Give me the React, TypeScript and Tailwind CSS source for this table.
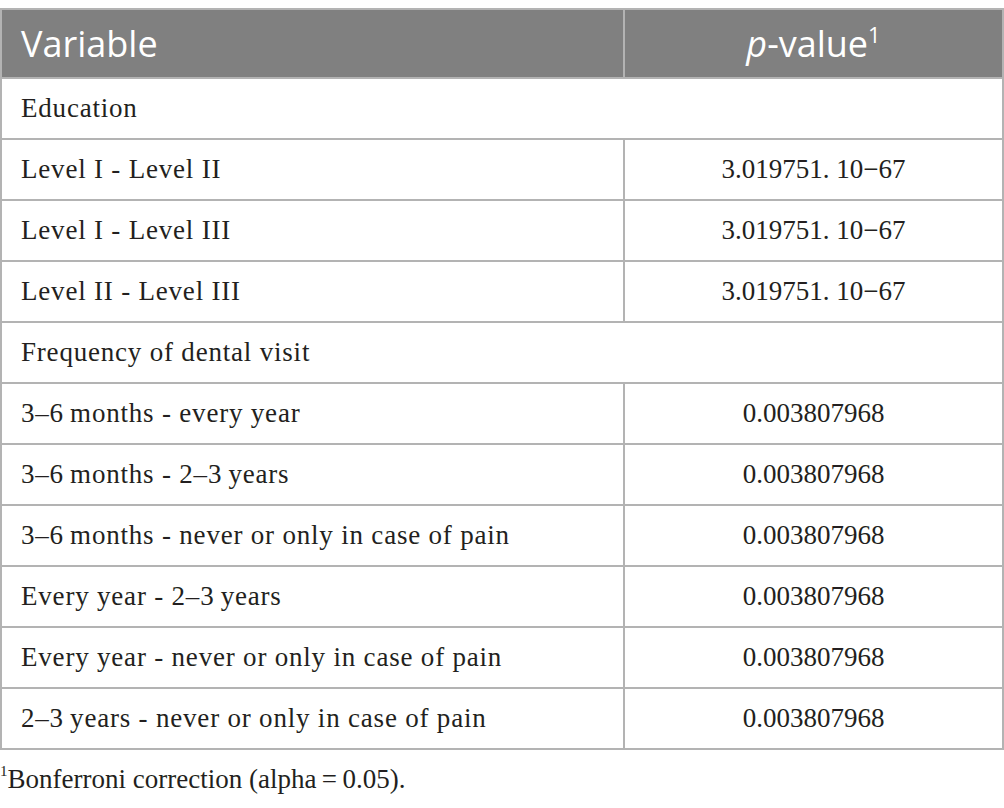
const rows: { label: string; value?: string }[] = [
  { label: 'Education' },
  { label: 'Level I - Level II', value: '3.019751. 10−67' },
  { label: 'Level I - Level III', value: '3.019751. 10−67' },
  { label: 'Level II - Level III', value: '3.019751. 10−67' },
  { label: 'Frequency of dental visit' },
  { label: '3–6\u2009months - every year', value: '0.003807968' },
  { label: '3–6\u2009months - 2–3\u2009years', value: '0.003807968' },
  { label: '3–6\u2009months - never or only in case of pain', value: '0.003807968' },
  { label: 'Every year - 2–3\u2009years', value: '0.003807968' },
  { label: 'Every year - never or only in case of pain', value: '0.003807968' },
  { label: '2–3\u2009years - never or only in case of pain', value: '0.003807968' },
]

export default function App() {
  return (
    <div className="w-[1004px] h-[808px] bg-white pt-[8px]">
      <table className="w-[1004px] border-collapse table-fixed">
        <colgroup>
          <col className="w-[623px]" />
          <col />
        </colgroup>
        <thead>
          <tr className="h-[69px] bg-[#808080] text-white font-['Open_Sans',sans-serif] text-[36px]">
            <th className="border-2 border-[#b3b3b3] font-normal text-left pl-[19px] pr-4 align-middle">
              Variable
            </th>
            <th className="border-2 border-[#b3b3b3] border-l-[#9a9a9a] font-normal text-center align-middle">
              <span className="italic">p</span>-value<sup className="text-[22px] -top-[0.6em]">1</sup>
            </th>
          </tr>
        </thead>
        <tbody className="text-[#231f20] text-[27px] font-['Liberation_Serif',serif]">
          {rows.map((r) =>
            r.value ? (
              <tr key={r.label} className="h-[61px]">
                <td className="border-2 border-[#b3b3b3] pl-[19px] tracking-[0.8px]">{r.label}</td>
                <td className="border-2 border-[#b3b3b3] text-center">{r.value}</td>
              </tr>
            ) : (
              <tr key={r.label} className="h-[61px]">
                <td colSpan={2} className="border-2 border-[#b3b3b3] pl-[19px] tracking-[0.8px]">
                  {r.label}
                </td>
              </tr>
            ),
          )}
        </tbody>
      </table>
      <p className="mt-[12px] text-[27px] leading-[34px] text-[#231f20] font-['Liberation_Serif',serif]">
        <sup className="text-[15px] -top-[0.8em]">1</sup>Bonferroni correction (alpha{'\u2009'}={'\u2009'}0.05).
      </p>
    </div>
  )
}
